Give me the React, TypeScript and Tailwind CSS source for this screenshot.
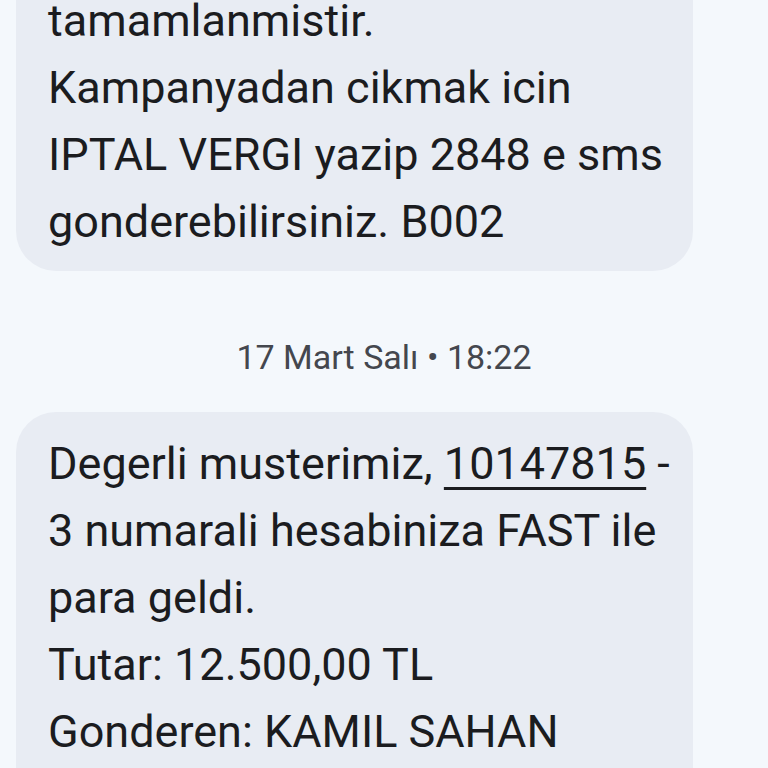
export default function App() {
  const font = { fontFamily: 'Roboto, "Noto Sans", sans-serif' };
  return (
    <div className="w-[768px] h-[768px] overflow-hidden bg-[#f4f8fc]" style={font}>
      <div className="flex flex-col -mt-[13px]">
        <div className="ml-[16px] w-[677px] rounded-b-[40px] bg-[#e8ecf3] pl-[32px] pr-[20px] pb-[16px] text-[#1b1c1f] text-[45px] leading-[67px]">
          <div>tamamlanmistir.</div>
          <div>Kampanyadan cikmak icin</div>
          <div>IPTAL VERGI yazip 2848 e sms</div>
          <div>gonderebilirsiniz. B002</div>
        </div>
        <div className="h-[141px] pt-[66px] text-center text-[34px] leading-[40px] text-[#44474e]">
          17 Mart Salı • 18:22
        </div>
        <div className="ml-[16px] w-[677px] rounded-t-[40px] bg-[#e8ecf3] pl-[32px] pr-[20px] pt-[18px] pb-[40px] text-[#1b1c1f] text-[45px] leading-[67px]">
          <div className="whitespace-nowrap">
            Degerli musterimiz,{" "}
            <span className="underline decoration-[3px] underline-offset-[8px]">10147815</span> -
          </div>
          <div>3 numarali hesabiniza FAST ile</div>
          <div>para geldi.</div>
          <div>Tutar: 12.500,00 TL</div>
          <div>Gonderen: KAMIL SAHAN</div>
        </div>
      </div>
    </div>
  );
}
